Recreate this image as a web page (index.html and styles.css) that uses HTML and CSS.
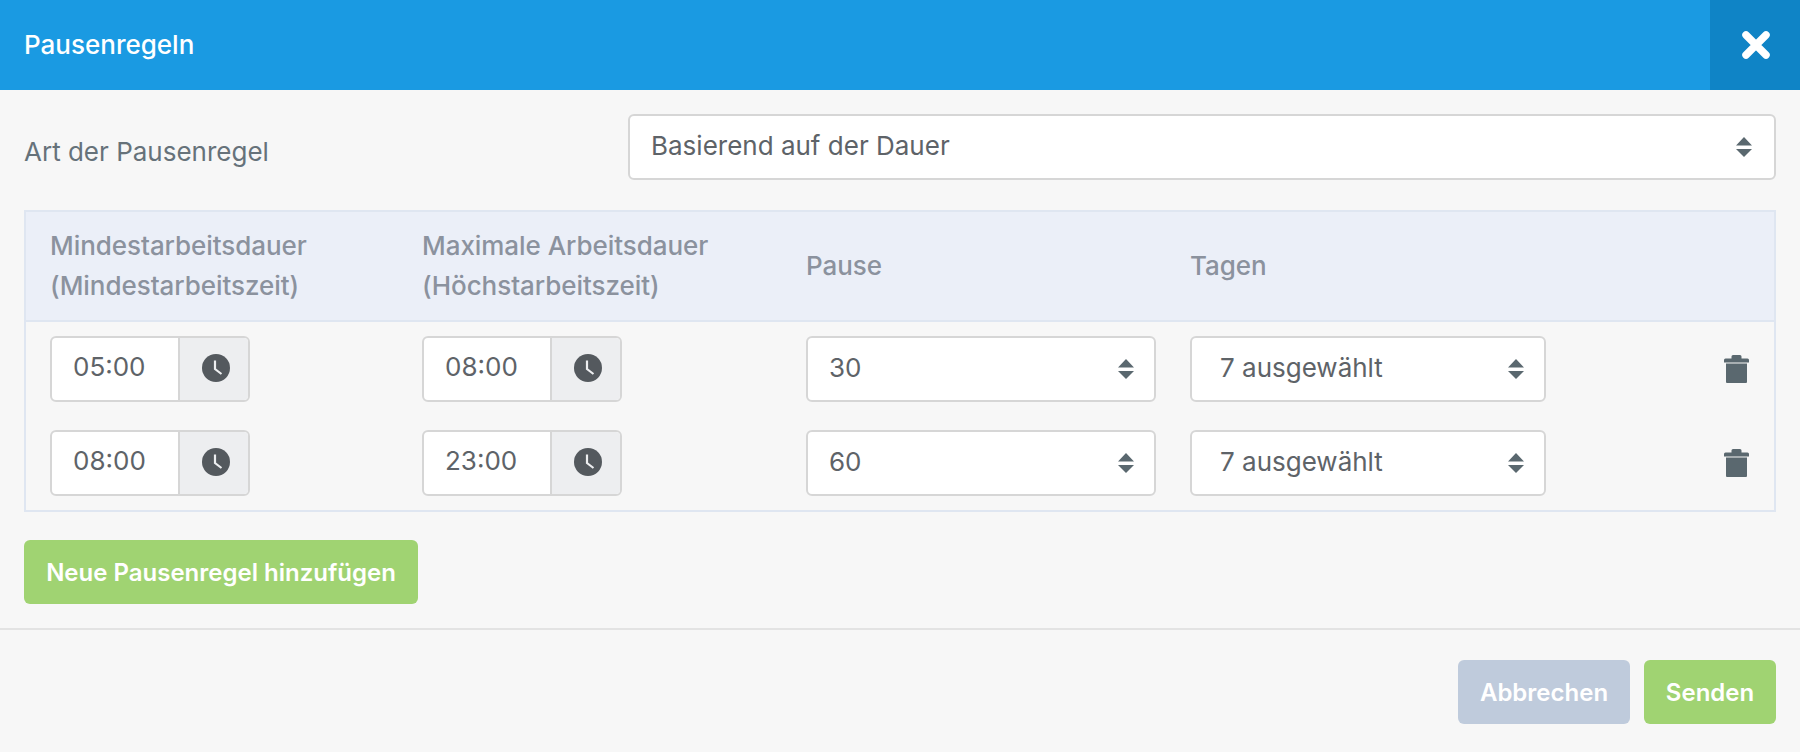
FILE: index.html
```html
<!DOCTYPE html>
<html lang="de">
<head>
<meta charset="utf-8">
<title>Pausenregeln</title>
<link rel="stylesheet" href="styles.css">
</head>
<body>
<svg class="defs" width="0" height="0" aria-hidden="true">
  <symbol id="clock" viewBox="0 0 28 28"><circle cx="14" cy="14" r="14" fill="#54595e"/><path d="M13 6.500v8.500l6.500 5" fill="none" stroke="#edeef0" stroke-width="2.200"/></symbol>
  <symbol id="updown" viewBox="0 0 16 20"><path d="M8 0l8 8.500H0zM0 12h16l-8 8z" fill="#5a686f"/></symbol>
  <symbol id="trash" viewBox="0 0 25 28"><path d="M9 0h7a1.500 1.500 0 0 1 1.500 1.500v2h6a1.500 1.500 0 0 1 1.500 1.500v2.500H0V5a1.500 1.500 0 0 1 1.500-1.500h6v-2A1.500 1.500 0 0 1 9 0zM2 8.500h21V27a1 1 0 0 1-1 1H3a1 1 0 0 1-1-1z" fill="#5a686f"/></symbol>
</svg>
<header class="head">
  <h1 class="title">Pausenregeln</h1>
  <button class="close" aria-label="Schließen"><svg width="28" height="28" viewBox="0 0 28 28"><path d="M4 4l20 20M24 4L4 24" stroke="#fff" stroke-width="7.500" stroke-linecap="round"/></svg></button>
</header>
<main class="body">
  <div class="type-row">
    <label class="type-label">Art der Pausenregel</label>
    <div class="select type-select"><span>Basierend auf der Dauer</span><svg class="arrows"><use href="#updown"/></svg></div>
  </div>
  <div class="table">
    <div class="grid thead">
      <div>Mindestarbeitsdauer<br>(Mindestarbeitszeit)</div>
      <div>Maximale Arbeitsdauer<br>(Höchstarbeitszeit)</div>
      <div>Pause</div>
      <div>Tagen</div>
    </div>
    <div class="tbody">
      <div class="grid trow">
        <div class="time"><span class="time-val">05:00</span><span class="time-addon"><svg class="clock"><use href="#clock"/></svg></span></div>
        <div class="time"><span class="time-val">08:00</span><span class="time-addon"><svg class="clock"><use href="#clock"/></svg></span></div>
        <div class="select pause"><span>30</span><svg class="arrows"><use href="#updown"/></svg></div>
        <div class="select days"><span>7 ausgewählt</span><svg class="arrows"><use href="#updown"/></svg></div>
        <svg class="trash"><use href="#trash"/></svg>
      </div>
      <div class="grid trow">
        <div class="time"><span class="time-val">08:00</span><span class="time-addon"><svg class="clock"><use href="#clock"/></svg></span></div>
        <div class="time"><span class="time-val">23:00</span><span class="time-addon"><svg class="clock"><use href="#clock"/></svg></span></div>
        <div class="select pause"><span>60</span><svg class="arrows"><use href="#updown"/></svg></div>
        <div class="select days"><span>7 ausgewählt</span><svg class="arrows"><use href="#updown"/></svg></div>
        <svg class="trash"><use href="#trash"/></svg>
      </div>
    </div>
  </div>
  <button class="btn add">Neue Pausenregel hinzufügen</button>
</main>
<footer class="foot">
  <button class="btn cancel">Abbrechen</button>
  <button class="btn send">Senden</button>
</footer>
</body>
</html>
```
FILE: styles.css
```css
* { box-sizing: border-box; }
html, body { margin: 0; height: 100%; }
body { background: #f7f7f7; font-family: Inter, Lato, sans-serif; color: #54595e; overflow: hidden; }
.defs { position: absolute; }
.head { height: 90px; background: #1a9ae2; display: flex; align-items: center; justify-content: space-between; }
.title { margin: 0 0 0 24px; font-size: 26px; font-weight: 500; color: #fff; position: relative; top: -1px; }
.close { width: 90px; height: 90px; border: 0; padding: 0 0 0 2px; background: #0f84c6; display: flex; align-items: center; justify-content: center; }
.body { padding: 24px 24px 24px; height: 540px; border-bottom: 2px solid #e3e3e3; }
.type-row { display: flex; align-items: center; height: 66px; }
.type-label { width: 604px; font-size: 26px; font-weight: 400; color: #66727a; padding-top: 8px; }
.select { display: flex; align-items: center; justify-content: space-between; height: 66px; background: #fff; border: 2px solid #d6d6d6; border-radius: 6px; font-size: 26px; font-weight: 400; color: #5e6368; }
.select span { position: relative; top: -2px; }
.type-select { flex: 1; padding: 0 22px 0 21px; }
.arrows { width: 16px; height: 20px; flex: none; }
.table { margin-top: 30px; border: 2px solid #dfe6f1; height: 302px; }
.grid { display: grid; grid-template-columns: 372px 384px 384px 355px 1fr; padding-left: 24px; align-items: center; }
.thead { height: 110px; background: #ebeff8; border-bottom: 2px solid #dfe6f1; color: #8b929e; font-size: 26px; font-weight: 500; line-height: 40px; letter-spacing: -0.05px; grid-template-columns: 372px 384px 384px 1fr; }
.tbody { display: flex; flex-direction: column; gap: 28px; padding-top: 14px; }
.time { width: 200px; height: 66px; display: flex; background: #fff; border: 2px solid #d6d6d6; border-radius: 6px; overflow: hidden; font-size: 26px; font-weight: 400; color: #5e6368; }
.time-val { width: 126px; padding-left: 21px; line-height: 58px; }
.time-addon { flex: 1; background: #edeef0; border-left: 2px solid #d6d6d6; display: flex; align-items: center; justify-content: center; padding: 0 0 2px 3px; }
.clock { width: 28px; height: 28px; }
.pause { width: 350px; padding: 0 20px 0 21px; }
.days { width: 356px; padding: 0 20px 0 28px; }
.trash { width: 25px; height: 28px; justify-self: end; margin-right: 25px; }
.btn { height: 64px; border: 0; border-radius: 6px; color: #fff; font-family: inherit; font-size: 24px; font-weight: 600; padding: 0; }
.add { display: block; width: 394px; margin-top: 28px; background: #a0d372; }
.foot { display: flex; justify-content: flex-end; gap: 14px; padding: 30px 24px 0; }
.cancel { width: 172px; background: #bfcbdc; }
.send { width: 132px; background: #a0d372; }
```
